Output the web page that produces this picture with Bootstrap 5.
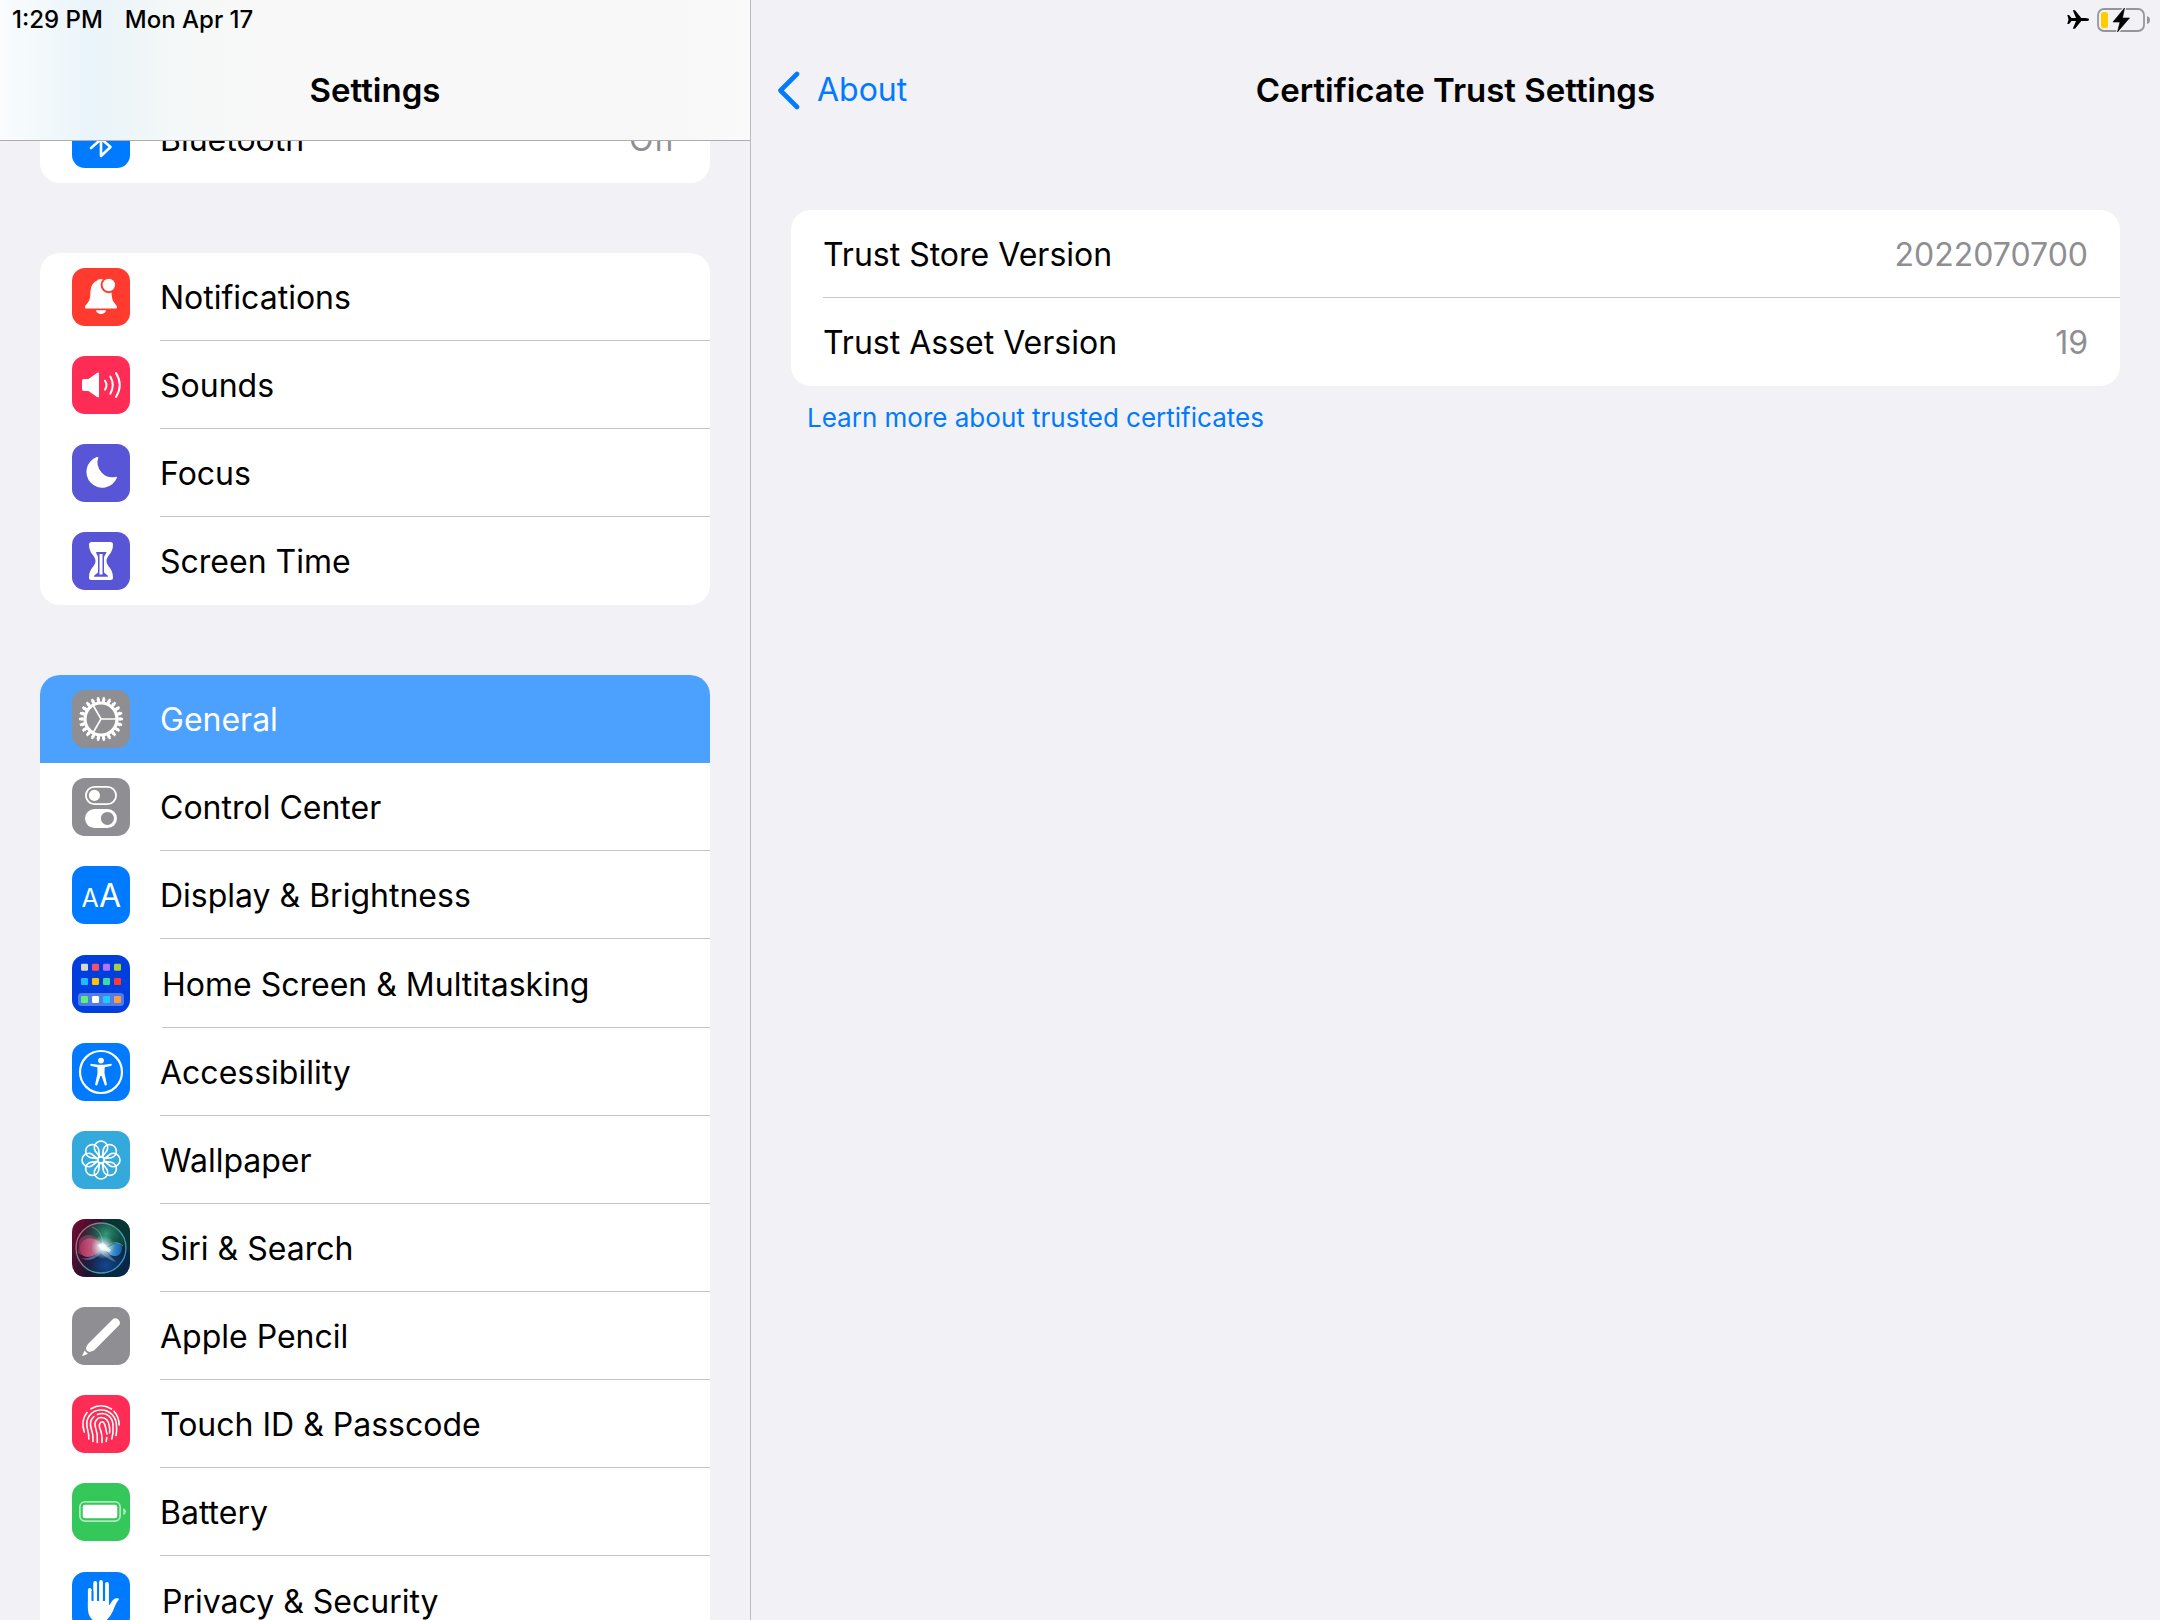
<!DOCTYPE html>
<html lang="en">
<head>
<meta charset="utf-8">
<meta name="viewport" content="width=device-width, initial-scale=1">
<title>Certificate Trust Settings</title>
<link href="https://cdn.jsdelivr.net/npm/bootstrap@5.3.0/dist/css/bootstrap.min.css" rel="stylesheet">
<style>
  :root { --pane: #f2f1f6; --line: #c6c6c8; --muted: #8e8e93; --blue: #007aff; }
  body { font-family: Inter, "Liberation Sans", sans-serif; font-size: 32px; line-height: 40px; color: #000; background: var(--pane); }
  a { text-decoration: none; color: inherit; }
  .side { flex: 0 0 751px; border-right: 1px solid #bcbbc0; }
  .side-head { height: 141px; border-bottom: 1px solid #adadb0; z-index: 2;
    background: linear-gradient(90deg, #fafcfe 0, #f3f9fb 40px, #eaf4fb 90px, #edf5f8 120px, #f5f8f8 180px, #f8f8f8 260px, #f8f8f8 680px, #fafafa 100%); }
  .clock { font-size: 24px; line-height: 28px; font-weight: 500; padding: 6px 12px; gap: 22px; }
  .bar-title { font-weight: 600; padding-top: 30px; margin: 0; font-size: 33px; line-height: 40px; }
  .side-list { padding: 95px 40px 0; gap: 70px; }
  .group { border-radius: 20px; background: #fff; overflow: hidden; }
  .item { height: 88px; padding-left: 32px; gap: 30px; }
  .item svg { width: 58px; height: 58px; flex: none; border-radius: 13px; }
  .item .item-label { height: 100%; border-bottom: 1px solid var(--line); padding: 2px 34px 0 0; }
  .item:last-child .item-label, .item.current .item-label { border-bottom: 0; }
  .item.current { background: #4ca1ff; color: #fff; }
  .item.roomy { height: 89px; padding-top: 1px; gap: 32px; }
  .muted { color: var(--muted); }
  .main-head { height: 141px; }
  .status { height: 40px; padding: 8px 10px 0; gap: 8px; }
  .head-row { display: grid; grid-template-columns: 1fr auto 1fr; padding: 30px 26px 0; }
  .back { color: var(--blue); gap: 16px; }
  .main-body { padding: 69px 40px 0; }
  .pair { height: 88px; margin-left: 32px; padding: 2px 32px 0 0; border-bottom: 1px solid var(--line); }
  .pair:last-child { border-bottom: 0; }
  .more { display: inline-block; color: var(--blue); font-size: 26px; line-height: 32px; margin: 16px; }
  dl, dt, dd { margin: 0; font-weight: 400; }
</style>
<script src="https://cdn.jsdelivr.net/npm/bootstrap@5.3.0/dist/js/bootstrap.bundle.min.js"></script>
</head>
<body>
<div class="d-flex vh-100 overflow-hidden">
  <aside class="side position-relative overflow-hidden">
    <header class="side-head position-absolute top-0 start-0 w-100">
      <div class="clock d-flex"><span>1:29 PM</span><span>Mon Apr 17</span></div>
      <h1 class="bar-title text-center" id="side-title">Settings</h1>
    </header>
    <nav class="side-list d-flex flex-column" aria-labelledby="side-title">
      <div class="group">
        <a href="#" class="item d-flex align-items-center">
          <svg viewBox="0 0 58 58" aria-hidden="true"><rect width="58" height="58" fill="#007aff"/><path d="M19 38 38.500 21 29 12V46L38.500 37 19 20" fill="none" stroke="#fff" stroke-width="2.600" stroke-linecap="round" stroke-linejoin="round"/></svg>
          <span class="item-label d-flex flex-fill align-items-center justify-content-between">Bluetooth <span class="muted">Off</span></span>
        </a>
      </div>
      <div class="group">
        <a href="#" class="item d-flex align-items-center">
          <svg viewBox="0 0 58 58" aria-hidden="true"><rect width="58" height="58" fill="#ff3b30"/><path fill="#fff" d="M14 40.500Q13 40.500 13 39.300C13 36.500 18 35 18.300 27 18.500 19 20 15 24.500 13 26 10.300 32 10.300 33 13 38 14.500 39.500 19 39.700 27 40 35 45 36.500 45 39.300Q45 40.500 44 40.500ZM24 42.200H34C33.500 47.200 24.500 47.200 24 42.200Z"/><circle cx="36.800" cy="17" r="8.200" fill="#ff3b30"/><circle cx="36.800" cy="17" r="6.200" fill="#fff"/></svg>
          <span class="item-label d-flex flex-fill align-items-center">Notifications</span>
        </a>
        <a href="#" class="item d-flex align-items-center">
          <svg viewBox="0 0 58 58" aria-hidden="true"><rect width="58" height="58" fill="#ff2d55"/><path fill="#fff" d="M12 23H16.500L25 17Q27 15.800 27 18V40Q27 42.200 25 41L16.500 35H12Q10 35 10 33V25Q10 23 12 23Z"/><path d="M33 24.700Q36 29.200 33 33.600M38.300 20.500Q43.300 29.200 38.300 37.800M44 17Q51.500 29.200 44 41" fill="none" stroke="#fff" stroke-width="2" stroke-linecap="round"/></svg>
          <span class="item-label d-flex flex-fill align-items-center">Sounds</span>
        </a>
        <a href="#" class="item d-flex align-items-center">
          <svg viewBox="0 0 58 58" aria-hidden="true"><rect width="58" height="58" fill="#5856d6"/><path fill="#fff" d="M26.300 13.600A15 15 0 0 0 44.200 32.800Q45.400 32.700 44.800 34A15.800 15.800 0 1 1 24.800 13.100Q26.500 12.600 26.300 13.600Z"/></svg>
          <span class="item-label d-flex flex-fill align-items-center">Focus</span>
        </a>
        <a href="#" class="item d-flex align-items-center">
          <svg viewBox="0 0 58 58" aria-hidden="true"><rect width="58" height="58" fill="#5856d6"/><path fill="#fff" d="M19.500 10H38.500Q41 10 41 12.500C41 22 34.500 23.500 34.500 29S41 36 41 45.500Q41 48 38.500 48H19.500Q17 48 17 45.500C17 36 23.500 34.500 23.500 29S17 22 17 12.500Q17 10 19.500 10Z"/><path fill="#5856d6" d="M24 20H34.600C34 22.500 32 23.500 32 25.500V40C32.500 42 36 42.500 36 44.800H22C22 42.500 25.500 42 26 40V25.500C26 23.500 24.600 22.500 24 20Z"/><path fill="#fff" d="M27.500 22H30.500V42.500H27.500Z"/></svg>
          <span class="item-label d-flex flex-fill align-items-center">Screen Time</span>
        </a>
      </div>
      <div class="group">
        <a href="#" class="item current d-flex align-items-center" aria-current="page">
          <svg viewBox="0 0 58 58" aria-hidden="true"><rect width="58" height="58" fill="#8e8e93"/><g fill="none" stroke="#fff"><circle cx="29" cy="29" r="16" stroke-width="3.200"/><circle cx="29" cy="29" r="18.800" stroke-width="3.200" pathLength="220" stroke-dasharray="6 4" stroke-dashoffset="3"/><circle cx="29" cy="29" r="20.500" stroke-width="3" pathLength="220" stroke-dasharray="4 6" stroke-dashoffset="2"/><path d="M44 29H29L21.500 16M29 29 21.500 42" stroke-width="1.700"/></g></svg>
          <span class="item-label d-flex flex-fill align-items-center">General</span>
        </a>
        <a href="#" class="item d-flex align-items-center">
          <svg viewBox="0 0 58 58" aria-hidden="true"><rect width="58" height="58" fill="#8e8e93"/><rect x="13.900" y="8.900" width="30.200" height="17.200" rx="8.600" fill="none" stroke="#fff" stroke-width="1.800"/><circle cx="22.400" cy="17.400" r="5.600" fill="#fff"/><rect x="13" y="31" width="32" height="19" rx="9.500" fill="#fff"/><circle cx="35.400" cy="40.400" r="6.500" fill="#8e8e93"/></svg>
          <span class="item-label d-flex flex-fill align-items-center">Control Center</span>
        </a>
        <a href="#" class="item d-flex align-items-center">
          <svg viewBox="0 0 58 58" aria-hidden="true"><rect width="58" height="58" fill="#007aff"/><g fill="#fff" text-anchor="middle" font-weight="400"><text x="18" y="41" font-size="25">A</text><text x="38" y="41" font-size="32">A</text></g></svg>
          <span class="item-label d-flex flex-fill align-items-center">Display &amp; Brightness</span>
        </a>
        <a href="#" class="item roomy d-flex align-items-center">
          <svg viewBox="0 0 58 58" aria-hidden="true"><rect width="58" height="58" fill="#003fde"/><rect x="6" y="38" width="46" height="13" rx="3.500" fill="#4f7de9"/>
            <rect x="9" y="8.800" width="7" height="7" rx="1.300" fill="#d9d6cf"/><rect x="20" y="8.800" width="7" height="7" rx="1.300" fill="#ff4d63"/><rect x="31" y="8.800" width="7" height="7" rx="1.300" fill="#b672ff"/><rect x="42" y="8.800" width="7" height="7" rx="1.300" fill="#abcf38"/>
            <rect x="9" y="23" width="7" height="7" rx="1.300" fill="#1cbcff"/><rect x="20" y="23" width="7" height="7" rx="1.300" fill="#ffc300"/><rect x="31" y="23" width="7" height="7" rx="1.300" fill="#3ddba2"/><rect x="42" y="23" width="7" height="7" rx="1.300" fill="#ff3a30"/>
            <rect x="9" y="41" width="7" height="7" rx="1.300" fill="#5cf276"/><rect x="20" y="41" width="7" height="7" rx="1.300" fill="#fff"/><rect x="31" y="41" width="7" height="7" rx="1.300" fill="#19cdff"/><rect x="42" y="41" width="7" height="7" rx="1.300" fill="#ff9c41"/></svg>
          <span class="item-label d-flex flex-fill align-items-center">Home Screen &amp; Multitasking</span>
        </a>
        <a href="#" class="item d-flex align-items-center">
          <svg viewBox="0 0 58 58" aria-hidden="true"><rect width="58" height="58" fill="#007aff"/><circle cx="29" cy="29" r="21" fill="none" stroke="#fff" stroke-width="2.200"/><g fill="#fff"><circle cx="29" cy="17.600" r="2.900"/><path d="M18.700 20.800 26 21.700H32L39.300 20.800Q40.500 22.300 39 22.900L32.700 24.200 32.500 30 34.900 41.500Q34 43.300 32.700 42L29.600 33H28.400L25.300 42Q24 43.300 23.100 41.500L25.500 30 25.300 24.200 19 22.900Q17.500 22.300 18.700 20.800Z"/></g></svg>
          <span class="item-label d-flex flex-fill align-items-center">Accessibility</span>
        </a>
        <a href="#" class="item d-flex align-items-center">
          <svg viewBox="0 0 58 58" aria-hidden="true"><defs><path id="petal" d="M28 26 23.300 20A6.600 6.600 0 1 1 34.700 20L30 26"/></defs><rect width="58" height="58" fill="#34aadc"/><g fill="none" stroke="#fff" stroke-width="1.700" stroke-linejoin="round"><use href="#petal"/><use href="#petal" transform="rotate(45 29 29)"/><use href="#petal" transform="rotate(90 29 29)"/><use href="#petal" transform="rotate(135 29 29)"/><use href="#petal" transform="rotate(180 29 29)"/><use href="#petal" transform="rotate(225 29 29)"/><use href="#petal" transform="rotate(270 29 29)"/><use href="#petal" transform="rotate(315 29 29)"/><circle cx="29" cy="29" r="3.200"/></g></svg>
          <span class="item-label d-flex flex-fill align-items-center">Wallpaper</span>
        </a>
        <a href="#" class="item d-flex align-items-center">
          <svg viewBox="0 0 58 58" aria-hidden="true">
            <defs>
              <linearGradient id="sky" x1="0" y1=".3" x2="1" y2=".7"><stop offset="0" stop-color="#6a0b30"/><stop offset=".45" stop-color="#1c1430"/><stop offset=".7" stop-color="#062b33"/><stop offset="1" stop-color="#08264b"/></linearGradient>
              <radialGradient id="leaf" cx=".6" cy=".22" r=".55"><stop offset="0" stop-color="#2f9c78"/><stop offset="1" stop-color="#0d4a3c" stop-opacity="0"/></radialGradient>
              <radialGradient id="sea" cx=".6" cy=".85" r=".5"><stop offset="0" stop-color="#1648a0" stop-opacity=".9"/><stop offset="1" stop-color="#12386f" stop-opacity="0"/></radialGradient>
              <linearGradient id="rose" x1="0" x2="1"><stop offset="0" stop-color="#b8305f"/><stop offset="1" stop-color="#e58aa8"/></linearGradient>
              <linearGradient id="wave" x1="0" x2="1"><stop offset="0" stop-color="#8fe3ff"/><stop offset="1" stop-color="#1769c8"/></linearGradient>
              <linearGradient id="rim" x1="0" y1=".2" x2="1" y2=".8"><stop offset="0" stop-color="#b06a80"/><stop offset=".5" stop-color="#4c9d92"/><stop offset="1" stop-color="#3f8fd0"/></linearGradient>
              <radialGradient id="spark"><stop offset="0" stop-color="#fff"/><stop offset=".25" stop-color="#eafcff" stop-opacity=".85"/><stop offset="1" stop-color="#b9e6ee" stop-opacity="0"/></radialGradient>
            </defs>
            <rect width="58" height="58" fill="url(#sky)"/><path d="M29 0H58V34Z" fill="#073a35" opacity=".8"/>
            <circle cx="29" cy="29" r="25" fill="url(#leaf)"/><circle cx="29" cy="29" r="25" fill="url(#sea)"/>
            <path d="M7 22C12 12 27 15 31 29 24 38 14 40 6 34Z" fill="#9c5a78" opacity=".5"/>
            <path d="M31 29C25 15 8 17 8 29S21 41 31 29Z" fill="url(#rose)" opacity=".85"/>
            <path d="M9 39C18 41 25 35 31 29 36 34 41 40 44 43 37 41 31 36 29 34 22 42 14 42 9 39Z" fill="#8aa0c4" opacity=".55"/>
            <path d="M31 29C38 31 40 23 46 24S51 36 44 37 36 32 31 29Z" fill="url(#wave)" opacity=".8"/>
            <path d="M20 8C29 11 31 20 31 29M31 29C38 25 44 20 51 27" fill="none" stroke="#8ad8c4" stroke-width=".8" opacity=".6"/>
            <circle cx="31" cy="28" r="12" fill="url(#spark)"/>
            <path d="M25 26 31 24 39 31 37 33 30 31Z" fill="#fff" opacity=".7"/>
            <circle cx="29" cy="29" r="25" fill="none" stroke="url(#rim)" stroke-width="1.300"/>
          </svg>
          <span class="item-label d-flex flex-fill align-items-center">Siri &amp; Search</span>
        </a>
        <a href="#" class="item d-flex align-items-center">
          <svg viewBox="0 0 58 58" aria-hidden="true"><rect width="58" height="58" fill="#8e8e93"/><path fill="#fff" d="M40.500 12.500A4.400 4.400 0 0 1 46.800 18.600L22 43.500 17.500 45Q13.500 43.500 14 40.500L16 37ZM12.800 43.300Q13.600 45.600 16 46.700L10.800 49Q10 49 10.300 48.300Z"/></svg>
          <span class="item-label d-flex flex-fill align-items-center">Apple Pencil</span>
        </a>
        <a href="#" class="item d-flex align-items-center">
          <svg viewBox="0 0 58 58" aria-hidden="true"><rect width="58" height="58" fill="#ff2d55"/><g fill="none" stroke="#fff" stroke-width="1.600" stroke-linecap="round"><path d="M19 13.800Q29 7.500 39.500 14M42 16.300Q47 22 47.200 30M12.300 37Q8.500 25.500 15 17.500"/><path d="M16.800 44Q17 39 15.500 34C12.500 24 19 15 29 15S44.500 23 44.500 31Q45 36 44 40.500"/><path d="M21 46.500Q21.500 40 19.500 34.500 16.500 26 22 21.500M25.500 19.500C35 16 41 23 41 31Q41.500 38 39.800 44"/><path d="M25.300 47.500Q26 40 23.800 33.500C21 26 26 22.500 29 22.500 34.500 22.500 37 27 37.500 32Q38 35 37.600 38"/><path d="M30 47.500Q30.500 39 27.600 32.500C26.500 29 29 26 31 27 34 29 33.500 35 35 39M34.800 42.500 34.200 46.500"/></g></svg>
          <span class="item-label d-flex flex-fill align-items-center">Touch ID &amp; Passcode</span>
        </a>
        <a href="#" class="item d-flex align-items-center">
          <svg viewBox="0 0 58 58" aria-hidden="true"><rect width="58" height="58" fill="#34c759"/><rect x="7.900" y="18.900" width="40.200" height="19.200" rx="5" fill="none" stroke="#fff" stroke-opacity=".6" stroke-width="1.800"/><rect x="10.700" y="21.700" width="34.600" height="13.600" rx="2.200" fill="#fff"/><path d="M51.200 25Q54 26 54 28.500T51.200 32Z" fill="#fff" fill-opacity=".6"/></svg>
          <span class="item-label d-flex flex-fill align-items-center">Battery</span>
        </a>
        <a href="#" class="item roomy d-flex align-items-center">
          <svg viewBox="0 0 58 58" aria-hidden="true"><rect width="58" height="58" fill="#007aff"/><g stroke="#fff" stroke-width="3.800" stroke-linecap="round"><path d="M17.800 18V36M23.200 11V34M29 10V34M35 12V34"/></g><path fill="#fff" d="M15.900 29H36.900V33.500C39.500 31 40.500 26.500 44.500 26.200 46.500 26 47.500 26.800 46.500 28 43 32 42 38 39 42.500 36.500 47 33 50 28 50 19 50 15.900 43 15.900 36Z"/><path d="M20.500 19V28.500M26.100 14V28M32 14V28" stroke="#007aff" stroke-width="1.700"/></svg>
          <span class="item-label d-flex flex-fill align-items-center">Privacy &amp; Security</span>
        </a>
      </div>
    </nav>
  </aside>

  <main class="flex-fill">
    <header class="main-head">
      <div class="status d-flex justify-content-end align-items-start">
        <svg width="22" height="24" viewBox="0 0 22 24" role="img" aria-label="Airplane mode"><path d="M22 11.500Q22 13 18.500 13H14.300L8 20.800H5.800L9 13H4.500L2 16H.3L1.500 11.500.3 7H2L4.500 10H9L5.800 2.200H8L14.300 10H18.500Q22 10 22 11.500Z"/></svg>
        <svg width="53" height="24" viewBox="0 0 53 24" role="img" aria-label="Battery charging"><rect x="1" y="1" width="46" height="22" rx="6" fill="none" stroke="#96969a" stroke-width="1.800"/><path d="M50 8Q53 9 53 12T50 16Z" fill="#96969a"/><rect x="4" y="4" width="7" height="16" rx="2.500" fill="#fc0"/><path d="M27.500 0 16 14H23L20.500 24 32.500 10H25.500Z" stroke="#f2f1f6" stroke-width="3"/><path d="M27.500 0 16 14H23L20.500 24 32.500 10H25.500Z" stroke="#000" stroke-width=".6"/></svg>
      </div>
      <div class="head-row">
        <a href="#" class="back d-flex align-items-center"><svg width="24" height="40" viewBox="0 0 24 40" aria-hidden="true"><path d="M20 4 3.500 20.500 20 37" fill="none" stroke="#007aff" stroke-width="4.600" stroke-linecap="round" stroke-linejoin="round"/></svg>About</a>
        <h2 class="bar-title pt-0">Certificate Trust Settings</h2>
      </div>
    </header>
    <div class="main-body">
      <dl class="group">
        <div class="pair d-flex align-items-center justify-content-between"><dt>Trust Store Version</dt><dd class="muted">2022070700</dd></div>
        <div class="pair d-flex align-items-center justify-content-between"><dt>Trust Asset Version</dt><dd class="muted">19</dd></div>
      </dl>
      <a href="#" class="more">Learn more about trusted certificates</a>
    </div>
  </main>
</div>
</body>
</html>
